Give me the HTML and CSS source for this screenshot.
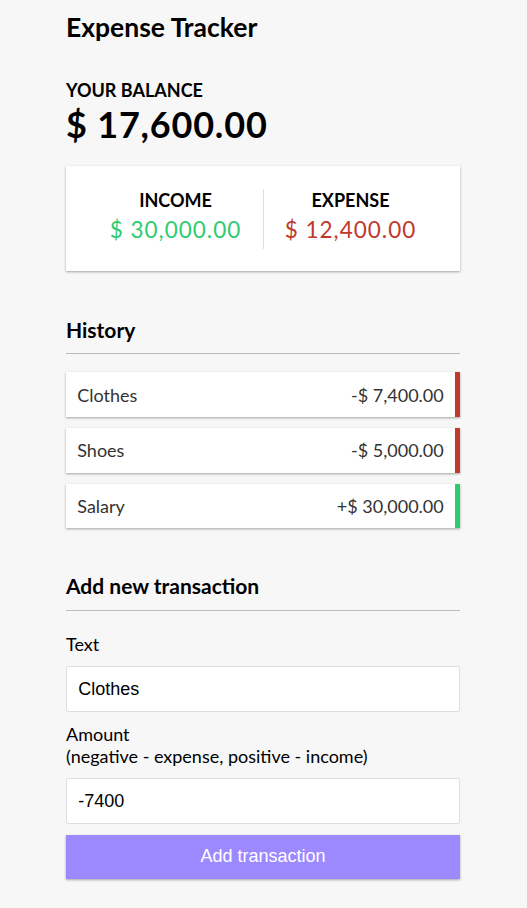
FILE: index.html
```html
<!DOCTYPE html>
<html lang="en">
<head>
<meta charset="utf-8">
<title>Expense Tracker</title>
<link rel="stylesheet" href="styles.css">
</head>
<body>
  <div class="container">
    <h2 class="title">Expense Tracker</h2>
    <h4 class="caps">Your Balance</h4>
    <h1 class="balance">$ 17,600.00</h1>

    <div class="inc-exp">
      <div class="inc-exp__col inc-exp__col--first">
        <h4 class="caps">Income</h4>
        <p class="money money--plus">$ 30,000.00</p>
      </div>
      <div class="inc-exp__col">
        <h4 class="caps">Expense</h4>
        <p class="money money--minus">$ 12,400.00</p>
      </div>
    </div>

    <h3 class="section-title">History</h3>
    <ul class="list">
      <li class="list__item list__item--minus"><span>Clothes</span><span>-$ 7,400.00</span></li>
      <li class="list__item list__item--minus"><span>Shoes</span><span>-$ 5,000.00</span></li>
      <li class="list__item list__item--plus"><span>Salary</span><span>+$ 30,000.00</span></li>
    </ul>

    <h3 class="section-title">Add new transaction</h3>
    <form class="form">
      <div class="form-control">
        <label class="label" for="text">Text</label>
        <input class="input" type="text" id="text" value="Clothes">
      </div>
      <div class="form-control">
        <label class="label" for="amount">Amount <br>(negative - expense, positive - income)</label>
        <input class="input" type="text" id="amount" value="-7400">
      </div>
      <button class="btn" type="button">Add transaction</button>
    </form>
  </div>
</body>
</html>
```

FILE: styles.css
```css
* {
  box-sizing: border-box;
}

body {
  background-color: #f7f7f7;
  margin: 0;
  padding-right: 1px;
  font-family: "Lato", "Noto Sans", sans-serif;
  font-size: 18px;
}

.container {
  width: 394px;
  margin: 0 auto;
  padding-top: 11px;
}

.title {
  font-size: 26.5px;
  margin: 0 0 36px;
}

.caps {
  font-size: 18px;
  margin: 0;
  text-transform: uppercase;
}

.balance {
  font-size: 36px;
  letter-spacing: 0.8px;
  margin: 1px 0 0;
}

.inc-exp {
  background-color: #fff;
  box-shadow: 0 1px 3px rgba(0, 0, 0, 0.12), 0 1px 2px rgba(0, 0, 0, 0.24);
  padding: 22.5px;
  display: flex;
  justify-content: space-between;
  margin: 20px 0 46px;
}

.inc-exp__col {
  flex: 1;
  text-align: center;
}

.inc-exp__col--first {
  border-right: 1px solid #dedede;
}

.money {
  font-size: 22.5px;
  letter-spacing: 1px;
  margin: 5.6px 0;
}

.money--plus {
  color: #2ecc71;
}

.money--minus {
  color: #c0392b;
}

.section-title {
  font-size: 21px;
  border-bottom: 1px solid #bbb;
  padding-bottom: 11.25px;
  margin: 45px 0 11.25px;
}

.list {
  list-style-type: none;
  padding: 0;
  margin: 18px 0 40px;
}

.list__item {
  background-color: #fff;
  box-shadow: 0 1px 3px rgba(0, 0, 0, 0.12), 0 1px 2px rgba(0, 0, 0, 0.24);
  color: #333;
  display: flex;
  justify-content: space-between;
  padding: 11.25px;
  margin: 11.25px 0;
}

.list__item--plus {
  border-right: 5.6px solid #2ecc71;
}

.list__item--minus {
  border-right: 5.6px solid #c0392b;
}

.form {
  margin: 0;
}

.label {
  display: inline-block;
  margin: 11.25px 0;
}

.input {
  border: 1px solid #dedede;
  border-radius: 2px;
  display: block;
  font-family: "Liberation Sans", Arial, sans-serif;
  font-size: 18px;
  padding: 11.25px;
  width: 100%;
  color: #000;
  background: #fff;
}

.btn {
  cursor: pointer;
  background-color: #9c88ff;
  box-shadow: 0 1px 3px rgba(0, 0, 0, 0.12), 0 1px 2px rgba(0, 0, 0, 0.24);
  color: #fff;
  border: 0;
  display: block;
  font-family: "Liberation Sans", Arial, sans-serif;
  font-size: 18px;
  margin: 11.25px 0 33.75px;
  padding: 11.25px;
  width: 100%;
}
```
